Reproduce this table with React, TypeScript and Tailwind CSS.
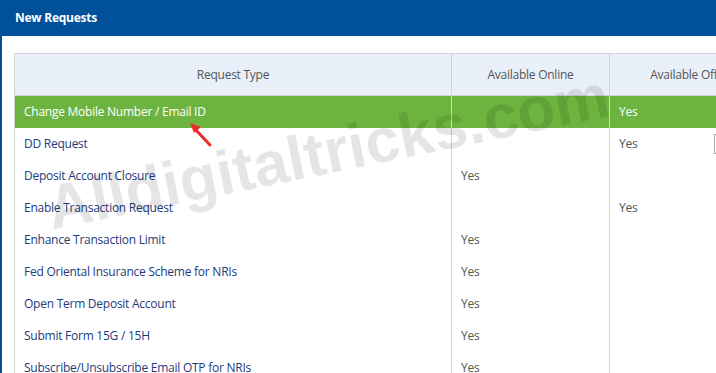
import { Fragment } from "react";

type Row = { name: string; online?: boolean; offline?: boolean; highlight?: boolean; box?: boolean };

const rows: Row[] = [
  { name: "Change Mobile Number / Email ID", offline: true, highlight: true },
  { name: "DD Request", offline: true, box: true },
  { name: "Deposit Account Closure", online: true },
  { name: "Enable Transaction Request", offline: true },
  { name: "Enhance Transaction Limit", online: true },
  { name: "Fed Oriental Insurance Scheme for NRIs", online: true },
  { name: "Open Term Deposit Account", online: true },
  { name: "Submit Form 15G / 15H", online: true },
  { name: "Subscribe/Unsubscribe Email OTP for NRIs", online: true },
];

export default function App() {
  return (
    <div className="relative h-[373px] w-[716px] overflow-hidden bg-white font-['Open_Sans',sans-serif] text-[12px] tracking-[-0.25px]">
      {/* Panel header */}
      <div className="flex h-9 items-center bg-[#00509a] pl-[15px]">
        <span className="text-[12px] font-bold text-white">New Requests</span>
      </div>

      <div className="border-l-2 border-[#0b4f93] pl-3 pt-[17px]">
        <table className="w-[820px] table-fixed border-collapse">
          <colgroup>
            <col className="w-[437px]" />
            <col className="w-[158px]" />
            <col className="w-[168px]" />
            <col />
          </colgroup>
          <thead>
            <tr className="h-[42px] bg-[#e9f0fa] text-[#555]">
              <th className="border border-[#d3d3d3] font-normal">Request Type</th>
              <th className="border border-[#d3d3d3] font-normal">Available Online</th>
              <th className="border border-[#d3d3d3] font-normal">Available Offline</th>
              <th className="border border-[#d3d3d3] font-normal"></th>
            </tr>
          </thead>
          <tbody>
            {rows.map((r) => (
              <Fragment key={r.name}>
                <tr className={r.highlight ? "h-8 bg-[#6cb43f] text-white" : "h-8"}>
                  <td className={`border-x border-[#d3d3d3] pl-[9px] ${r.highlight ? "" : "text-[#1e3a7b]"}`}>{r.name}</td>
                  <td className={`border-x border-[#d3d3d3] pl-[9px] ${r.highlight ? "" : "text-[#555]"}`}>{r.online ? "Yes" : ""}</td>
                  <td className={`border-x border-[#d3d3d3] pl-[9px] ${r.highlight ? "" : "text-[#555]"}`}>
                    <div className="flex items-center">
                      <span className="w-[95px]">{r.offline ? "Yes" : ""}</span>
                      {r.box && <span className="h-5 w-10 shrink-0 border border-[#aaa] bg-white" />}
                    </div>
                  </td>
                  <td className="border-x border-[#d3d3d3]"></td>
                </tr>
              </Fragment>
            ))}
          </tbody>
        </table>
      </div>

      {/* Watermark */}
      <div className="pointer-events-none absolute left-[42px] top-[121px] origin-center -rotate-[11.5deg] font-['Liberation_Sans',sans-serif] text-[62px] font-bold leading-none tracking-normal text-black/10">
        Alldigitaltricks.com
      </div>

      {/* Red arrow */}
      <svg className="pointer-events-none absolute left-[186px] top-[118px]" width="30" height="30" viewBox="0 0 30 30">
        <line x1="24" y1="27" x2="9" y2="11" stroke="#ec2b2b" strokeWidth="3" strokeLinecap="round" />
        <polygon points="4,5 15,9 8,15" fill="#ec2b2b" />
      </svg>
    </div>
  );
}
